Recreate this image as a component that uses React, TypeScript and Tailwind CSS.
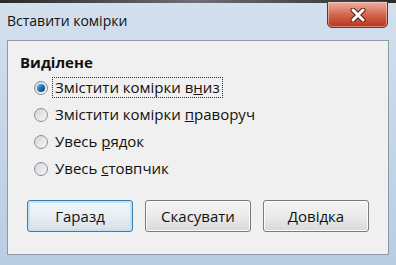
import React from "react";

const font = { fontFamily: '"Open Sans", "Noto Sans", sans-serif' };

function Radio({ checked }: { checked?: boolean }) {
  return (
    <div className="w-[14px] h-[14px] rounded-full border border-[#8a8f96] bg-gradient-to-br from-[#d3d6da] to-[#f6f6f6] flex items-center justify-center shrink-0">
      {checked && (
        <div className="w-[8px] h-[8px] rounded-full bg-gradient-to-br from-[#7fc0ea] via-[#1d6fb0] to-[#0b3f6e]" />
      )}
    </div>
  );
}

function Btn({ children, def }: { children: React.ReactNode; def?: boolean }) {
  return (
    <div
      className={
        "w-[106px] h-[32px] rounded-[3px] flex items-center justify-center text-[15px] text-[#111] " +
        (def
          ? "border border-[#3d7bad] shadow-[inset_0_0_0_2px_#bfe3f5] bg-gradient-to-b from-[#f3f8fb] via-[#e9eef2] to-[#d7dfe6]"
          : "border border-[#7a7a7a] shadow-[inset_0_0_0_1px_#fbfbfb] bg-gradient-to-b from-[#f4f4f4] via-[#ebebeb] to-[#d9d9d9]")
      }
    >
      {children}
    </div>
  );
}

export default function App() {
  return (
    <div
      className="w-[396px] h-[265px] flex flex-col bg-gradient-to-b from-[#d3e0ee] via-[#c6d6e8] to-[#b9cde2] overflow-hidden"
      style={font}
    >
      <div className="h-[3px] bg-gradient-to-r from-[#2a2a2a] via-[#6d7075] to-[#2a2a2a] shrink-0" />
      <div className="h-[37px] flex items-start justify-between pl-[7px] pr-[8px] shrink-0">
        <div className="text-[14px] text-[#111] self-center leading-none pb-[2px]">Вставити комірки</div>
        <div className="w-[61px] h-[27px] -mt-[2px] rounded-b-[5px] border border-[#7e2a1c] bg-gradient-to-b from-[#eab1a2] via-[#d3674f] to-[#b8321c] flex items-center justify-center shadow-[inset_0_0_0_1px_rgba(255,220,210,0.5)]">
          <svg width="18" height="14" viewBox="0 0 18 14">
            <path d="M4 2 L14 12 M14 2 L4 12" stroke="#5a1f14" strokeWidth="5" strokeLinecap="round" />
            <path d="M4 2 L14 12 M14 2 L4 12" stroke="#ffffff" strokeWidth="3" strokeLinecap="round" />
          </svg>
        </div>
      </div>
      <div className="mx-[7px] mb-[10px] flex-1 border border-[#8d99a6] bg-[#f0f0f0] flex flex-col pt-[11px] pl-[12px]">
        <div className="text-[15px] font-bold text-[#111] leading-[20px]">Виділене</div>
        <div className="flex flex-col mt-[2px] pl-[14px] text-[15px] text-[#111]">
          <div className="h-[27px] flex items-center gap-[4px]">
            <Radio checked />
            <span className="border border-dotted border-[#333] px-[2px] leading-[19px]">
              Змістити комірки в<u>н</u>из
            </span>
          </div>
          <div className="h-[27px] flex items-center gap-[4px]">
            <Radio />
            <span className="border border-transparent px-[2px] leading-[19px]">
              Змістити комірки <u>п</u>раворуч
            </span>
          </div>
          <div className="h-[27px] flex items-center gap-[4px]">
            <Radio />
            <span className="border border-transparent px-[2px] leading-[19px]">
              Увесь <u>р</u>ядок
            </span>
          </div>
          <div className="h-[27px] flex items-center gap-[4px]">
            <Radio />
            <span className="border border-transparent px-[2px] leading-[19px]">
              Увесь <u>с</u>товпчик
            </span>
          </div>
        </div>
        <div className="flex gap-[12px] mt-[18px] pl-[7px]">
          <Btn def>Гаразд</Btn>
          <Btn>Скасувати</Btn>
          <Btn>
            <span>
              <u>Д</u>овідка
            </span>
          </Btn>
        </div>
      </div>
    </div>
  );
}
